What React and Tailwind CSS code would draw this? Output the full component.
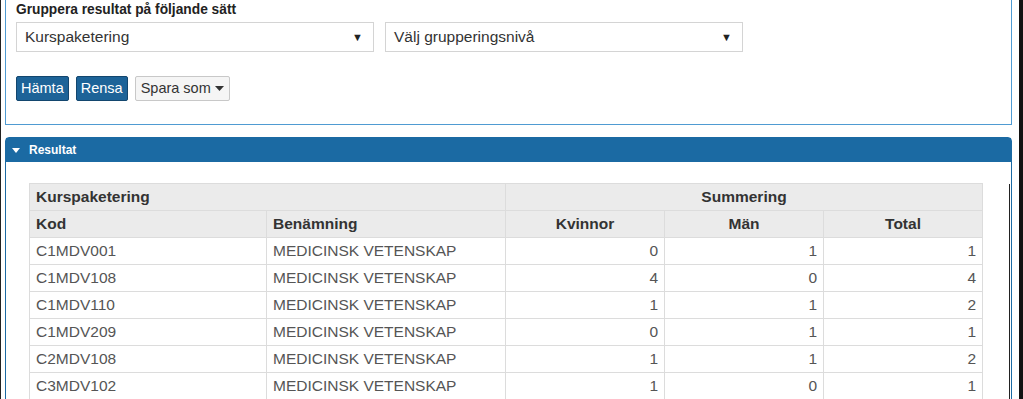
import React from 'react';

const rows = [
  { kod: 'C1MDV001', namn: 'MEDICINSK VETENSKAP', k: 0, m: 1, t: 1 },
  { kod: 'C1MDV108', namn: 'MEDICINSK VETENSKAP', k: 4, m: 0, t: 4 },
  { kod: 'C1MDV110', namn: 'MEDICINSK VETENSKAP', k: 1, m: 1, t: 2 },
  { kod: 'C1MDV209', namn: 'MEDICINSK VETENSKAP', k: 0, m: 1, t: 1 },
  { kod: 'C2MDV108', namn: 'MEDICINSK VETENSKAP', k: 1, m: 1, t: 2 },
  { kod: 'C3MDV102', namn: 'MEDICINSK VETENSKAP', k: 1, m: 0, t: 1 },
];

const Select = ({ label, className }) => (
  <div className={`flex h-[30px] items-center justify-between border border-[#d4d4d4] bg-white pl-[8px] pr-[10px] text-[15.5px] text-[#333] ${className}`}>
    <span>{label}</span>
    <span className="text-[11px] text-[#222]">▼</span>
  </div>
);

const BlueButton = ({ children }) => (
  <button className="h-[25px] rounded-[2px] border border-[#13466e] bg-[#1d6398] px-[4px] text-[14.5px] leading-none text-white">
    {children}
  </button>
);

export default function App() {
  const th = 'border border-[#dcdcdc] px-[6px] font-bold text-[#333]';
  const td = 'border border-[#dcdcdc] px-[6px] text-[#555]';

  return (
    <div className="flex h-[399px] w-[1023px] overflow-hidden bg-white font-['Liberation_Sans',Arial,sans-serif]">
      <div className="w-px shrink-0 bg-[#222]" />
      <div className="flex w-[1018px] shrink-0 flex-col pl-[4px] pr-[7px]">
        <div className="-mt-px flex h-[126px] shrink-0 flex-col border border-[#4f9bd2] px-[10px]">
          <div className="mt-[2px] text-[13.75px] font-bold leading-[15px] text-[#222]">
            Gruppera resultat på följande sätt
          </div>
          <div className="mt-[5px] flex gap-[11px]">
            <Select label="Kurspaketering" className="w-[358px]" />
            <Select label="Välj grupperingsnivå" className="w-[358px]" />
          </div>
          <div className="mt-[24px] flex gap-[7px]">
            <BlueButton>Hämta</BlueButton>
            <BlueButton>Rensa</BlueButton>
            <button className="flex h-[25px] items-center gap-[4px] rounded-[2px] border border-[#c8c8c8] bg-[#f5f5f5] px-[5px] text-[14.5px] leading-none text-[#333]">
              Spara som
              <svg width="9" height="5" viewBox="0 0 9 5"><path d="M0 0h9L4.5 5z" fill="#333" /></svg>
            </button>
          </div>
        </div>

        <div className="mt-[12px] flex flex-1 flex-col rounded-t-[4px] border border-[#1b6aa3]">
          <div className="flex h-[24px] shrink-0 items-center gap-[9px] bg-[#1b6aa3] pl-[6px] text-[12px] font-bold text-white">
            <svg width="8" height="5" viewBox="0 0 8 5"><path d="M0 0h8L4 5z" fill="#fff" /></svg>
            Resultat
          </div>
          <div className="flex flex-1 pl-[23px] pt-[21px]">
            <table className="h-fit w-[954px] border-collapse text-[15.5px] leading-[18px]">
              <thead>
                <tr className="h-[27px] bg-[#ebebeb]">
                  <th colSpan={2} className={`${th} text-left`}>Kurspaketering</th>
                  <th colSpan={3} className={`${th} text-center`}>Summering</th>
                </tr>
                <tr className="h-[27px] bg-[#ebebeb]">
                  <th className={`${th} w-[237px] text-left`}>Kod</th>
                  <th className={`${th} w-[239px] text-left`}>Benämning</th>
                  <th className={`${th} w-[159px] text-center`}>Kvinnor</th>
                  <th className={`${th} w-[159px] text-center`}>Män</th>
                  <th className={`${th} w-[159px] text-center`}>Total</th>
                </tr>
              </thead>
              <tbody>
                {rows.map((r) => (
                  <tr key={r.kod} className="h-[27px]">
                    <td className={td}>{r.kod}</td>
                    <td className={td}>{r.namn}</td>
                    <td className={`${td} text-right`}>{r.k}</td>
                    <td className={`${td} text-right`}>{r.m}</td>
                    <td className={`${td} text-right`}>{r.t}</td>
                  </tr>
                ))}
              </tbody>
            </table>
            <div className="ml-auto mr-[1px] mt-[1px] w-px bg-[#222]" />
          </div>
        </div>
      </div>
      <div className="flex-1 bg-[#111]" />
    </div>
  );
}
